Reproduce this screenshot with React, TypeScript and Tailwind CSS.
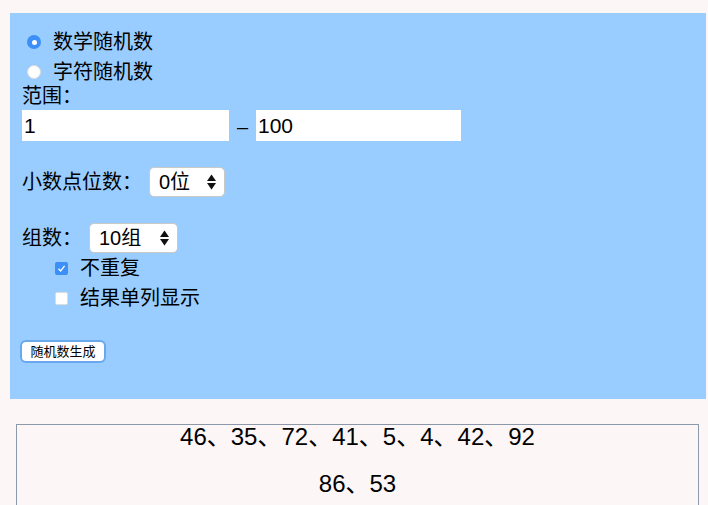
const font = { fontFamily: '"Liberation Sans", "Noto Sans CJK SC", sans-serif' };

const Radio = ({ checked }: { checked: boolean }) =>
  checked ? (
    <span className="ml-[5px] w-[14px] h-[14px] rounded-full bg-[#3b8ff6] flex items-center justify-center shrink-0">
      <span className="w-[5px] h-[5px] rounded-full bg-white" />
    </span>
  ) : (
    <span className="ml-[5px] w-[14px] h-[14px] rounded-full bg-white border border-[#dcdcdc] shrink-0" />
  );

const Checkbox = ({ checked }: { checked: boolean }) =>
  checked ? (
    <span className="w-[13px] h-[13px] rounded-[2px] bg-[#3b8ff6] flex items-center justify-center shrink-0">
      <svg width="9" height="9" viewBox="0 0 9 9">
        <path d="M1.5 4.8 L3.6 7 L7.6 1.8" stroke="white" strokeWidth="1.3" fill="none" />
      </svg>
    </span>
  ) : (
    <span className="w-[13px] h-[13px] rounded-[2px] bg-white border border-[#dcdcdc] shrink-0" />
  );

const SelectBox = ({ label, width }: { label: string; width: string }) => (
  <div
    className={`${width} h-[30px] ml-[7px] bg-white rounded-[5px] border border-[#c9c9c9] flex items-center justify-between pl-[9px] pr-[8px] text-[20px] leading-none`}
  >
    <span>{label}</span>
    <svg width="9" height="16" viewBox="0 0 9 16">
      <path d="M0 7 L4.5 0.5 L9 7 Z" fill="#111" />
      <path d="M0 9 L9 9 L4.5 15.5 Z" fill="#111" />
    </svg>
  </div>
);

export default function App() {
  return (
    <div className="h-[505px] bg-[#fdf6f7] pt-[13px] text-black overflow-hidden" style={font}>
      <div className="ml-[10px] w-[696px] bg-[#99ccff] pl-[12px] pt-[14px] pb-[38px]">
        <div className="h-[30px] flex items-center gap-[12px] text-[20px]">
          <Radio checked />
          <span>数学随机数</span>
        </div>
        <div className="h-[30px] flex items-center gap-[12px] text-[20px]">
          <Radio checked={false} />
          <span>字符随机数</span>
        </div>
        <div className="h-[18px] text-[20px] leading-[18px]">范围：</div>
        <div className="mt-[5px] h-[31px] flex items-center">
          <div className="w-[207px] h-[31px] bg-white pl-[2px] flex items-center text-[21px]">1</div>
          <span className="w-[27px] text-center text-[20px] pt-[2px]">–</span>
          <div className="w-[205px] h-[31px] bg-white pl-[2px] flex items-center text-[21px]">100</div>
        </div>
        <div className="mt-[26px] h-[30px] flex items-center text-[20px]">
          <span>小数点位数：</span>
          <SelectBox label="0位" width="w-[76px]" />
        </div>
        <div className="mt-[26px] h-[30px] flex items-center text-[20px]">
          <span>组数：</span>
          <SelectBox label="10组" width="w-[89px]" />
        </div>
        <div className="h-[30px] flex items-center gap-[12px] pl-[33px] text-[20px]">
          <Checkbox checked />
          <span>不重复</span>
        </div>
        <div className="h-[30px] flex items-center gap-[12px] pl-[33px] text-[20px]">
          <Checkbox checked={false} />
          <span>结果单列显示</span>
        </div>
        <button className="mt-[29px] w-[82px] h-[19px] bg-white rounded-[4px] ring-2 ring-[#6aa8ee] text-[13px] leading-none flex items-center justify-center">
          随机数生成
        </button>
      </div>
      <div className="mt-[25px] ml-[16px] w-[683px] h-[90px] border border-[#8c99aa] text-[24px] text-center">
        <div className="leading-[24px]">46、35、72、41、5、4、42、92</div>
        <div className="mt-[23px] leading-[24px]">86、53</div>
      </div>
    </div>
  );
}
